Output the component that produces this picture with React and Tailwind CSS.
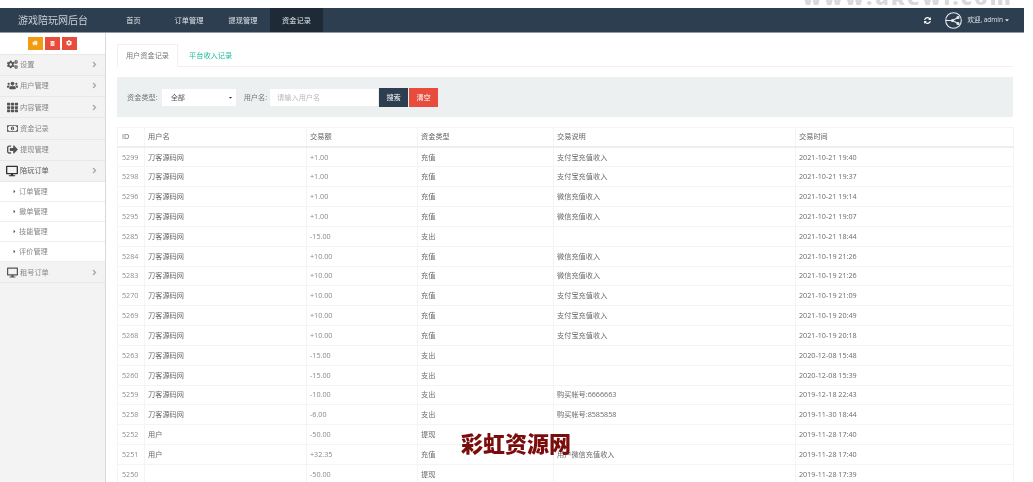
import React from "react";
import { FaCogs, FaUsers, FaTh, FaRegMoneyBillAlt, FaSignOutAlt, FaDesktop, FaHome, FaTrashAlt, FaCog, FaSyncAlt, FaCaretDown, FaCaretRight, FaAngleRight } from "react-icons/fa";

const font = "font-['Open_Sans','Noto_Sans_CJK_SC',sans-serif]";

const rows = [
  ["5299", "刀客源码网", "+1.00", "充值", "支付宝充值收入", "2021-10-21 19:40"],
  ["5298", "刀客源码网", "+1.00", "充值", "支付宝充值收入", "2021-10-21 19:37"],
  ["5296", "刀客源码网", "+1.00", "充值", "微信充值收入", "2021-10-21 19:14"],
  ["5295", "刀客源码网", "+1.00", "充值", "微信充值收入", "2021-10-21 19:07"],
  ["5285", "刀客源码网", "-15.00", "支出", "", "2021-10-21 18:44"],
  ["5284", "刀客源码网", "+10.00", "充值", "微信充值收入", "2021-10-19 21:26"],
  ["5283", "刀客源码网", "+10.00", "充值", "微信充值收入", "2021-10-19 21:26"],
  ["5270", "刀客源码网", "+10.00", "充值", "支付宝充值收入", "2021-10-19 21:09"],
  ["5269", "刀客源码网", "+10.00", "充值", "支付宝充值收入", "2021-10-19 20:49"],
  ["5268", "刀客源码网", "+10.00", "充值", "支付宝充值收入", "2021-10-19 20:18"],
  ["5263", "刀客源码网", "-15.00", "支出", "", "2020-12-08 15:48"],
  ["5260", "刀客源码网", "-15.00", "支出", "", "2020-12-08 15:39"],
  ["5259", "刀客源码网", "-10.00", "支出", "购买帐号:6666663", "2019-12-18 22:43"],
  ["5258", "刀客源码网", "-6.00", "支出", "购买帐号:8585858", "2019-11-30 18:44"],
  ["5252", "用户", "-50.00", "提现", "", "2019-11-28 17:40"],
  ["5251", "用户", "+32.35", "充值", "用户微信充值收入", "2019-11-28 17:40"],
  ["5250", "", "-50.00", "提现", "", "2019-11-28 17:39"],
];

function MenuItem({ icon, label, arrow = true, h = "h-[21.3px]" }) {
  return (
    <div className={`flex ${h} items-center border-b border-[#e8e8e8] pl-[5px] pr-[6px] text-[#888]`}>
      <span className="flex w-[14px] justify-center text-[11px] text-[#555]">{icon}</span>
      <span className="ml-[1px] flex-1 text-[7.2px] leading-none">{label}</span>
      {arrow && <FaAngleRight className="text-[9px] text-[#aaa]" />}
    </div>
  );
}

function SubItem({ label }) {
  return (
    <div className="flex h-[20px] items-center border-b border-[#eee] bg-white pl-[12px] text-[7.2px] text-[#888]">
      <FaCaretRight className="mr-[2px] text-[5px] text-[#555]" />
      {label}
    </div>
  );
}

function NavLink({ label, active, w }) {
  return (
    <div className={`flex h-full items-center justify-center text-[7.2px] ${w} ${active ? "bg-[#1e2a36] text-[#dfe4e8]" : "text-[#dfe4e8]"}`}>
      {label}
    </div>
  );
}

export default function App() {
  return (
    <div className={`relative h-[482px] w-[1033px] overflow-hidden bg-white blur-[0.35px] ${font}`}>
      <div className="flex h-[8px] justify-end overflow-hidden pr-[20px]">
        <div className="-mt-[15px] text-[21px] font-extrabold leading-[24px] tracking-[2.2px] text-[#d9d9d9]">www.ukewl.com</div>
      </div>

      <div className="flex h-[25px] w-[1024px] items-center border-b border-[#8f9aa5] bg-[#2c3e50]">
        <div className="w-[105px] pl-[18px] text-[10px] text-[#c9d0d6]">游戏陪玩网后台</div>
        <div className="flex h-full">
          <NavLink label="首页" w="w-[57px]" />
          <NavLink label="订单管理" w="w-[54px]" />
          <NavLink label="提现管理" w="w-[54px]" />
          <NavLink label="资金记录" w="w-[53px]" active />
        </div>
        <div className="ml-auto flex items-center pr-[14px] text-[#dfe4e8]">
          <FaSyncAlt className="mr-[14px] text-[7px] text-white" />
          <svg width="17" height="17" viewBox="0 0 17 17" fill="none" stroke="#e8ecef" strokeWidth="1.1">
            <circle cx="8.5" cy="8.5" r="7.8" />
            <path d="M1 8.5h6M7.5 8.5l5.5-3M7.5 8.5l5.5 3" />
            <circle cx="7.5" cy="8.5" r="1" fill="#e8ecef" />
            <circle cx="13" cy="5.5" r="1" fill="#e8ecef" />
            <circle cx="13" cy="11.5" r="1" fill="#e8ecef" />
          </svg>
          <span className="ml-[5px] text-[6.5px]">欢迎, admin</span>
          <FaCaretDown className="ml-[1px] text-[6px]" />
        </div>
      </div>

      <div className="flex h-[449px] w-[1024px]">
        <aside className="h-full w-[106px] shrink-0 border-r border-[#d9d9d9] bg-[#f3f3f3]">
          <div className="flex h-[21.5px] items-center justify-center gap-[2px] border-b border-[#e8e8e8] bg-white pr-[1px]">
            <span className="flex h-[13px] w-[15px] items-center justify-center bg-[#f39c12] text-[6px] text-white"><FaHome /></span>
            <span className="flex h-[13px] w-[15px] items-center justify-center bg-[#e74c3c] text-[5px] text-white"><FaTrashAlt /></span>
            <span className="flex h-[13px] w-[15px] items-center justify-center bg-[#e74c3c] text-[6px] text-white"><FaCog /></span>
          </div>
          <MenuItem icon={<FaCogs />} label="设置" />
          <MenuItem icon={<FaUsers />} label="用户管理" />
          <MenuItem icon={<FaTh />} label="内容管理" />
          <MenuItem icon={<FaRegMoneyBillAlt />} label="资金记录" arrow={false} />
          <MenuItem icon={<FaSignOutAlt />} label="提现管理" arrow={false} />
          <div className="flex h-[21px] items-center border-b border-[#e8e8e8] pl-[5px] pr-[6px] text-[#555]">
            <span className="flex w-[14px] justify-center text-[12px] text-[#333]"><FaDesktop /></span>
            <span className="ml-[1px] flex-1 text-[7.2px] leading-none">陪玩订单</span>
            <FaAngleRight className="text-[9px] text-[#aaa]" />
          </div>
          <SubItem label="订单管理" />
          <SubItem label="撤单管理" />
          <SubItem label="技能管理" />
          <SubItem label="评价管理" />
          <MenuItem icon={<FaDesktop />} label="租号订单" h="h-[21.5px]" />
        </aside>

        <main className="min-w-0 flex-1 pl-[11px] pr-[11px]">
          <div className="mt-[11px] flex h-[23px] border-b border-[#f0f0f0]">
            <div className="flex h-[23px] w-[61px] items-center justify-center border border-b-white border-[#f0f0f0] bg-white text-[7.2px] text-[#777]">用户资金记录</div>
            <div className="ml-[11px] flex items-center text-[7.2px] text-[#1abc9c]">平台收入记录</div>
          </div>

          <div className="mt-[10px] flex h-[40px] items-center bg-[#ecf0f1] pl-[10px] text-[7.2px] text-[#777]">
            <span>资金类型:</span>
            <div className="ml-[4px] flex h-[17px] w-[74px] items-center justify-between bg-white pl-[9px] pr-[3px] text-[#555]">
              <span>全部</span>
              <FaCaretDown className="text-[5px] text-[#333]" />
            </div>
            <span className="ml-[8px]">用户名:</span>
            <div className="ml-[3px] flex h-[17px] w-[108px] items-center bg-white pl-[7px] text-[#bbb]">请输入用户名</div>
            <button className="ml-[1px] h-[19px] w-[29px] bg-[#2c3e50] text-[7.2px] text-white">搜索</button>
            <button className="ml-[1px] h-[19px] w-[29px] bg-[#e74c3c] text-[7.2px] text-white">清空</button>
          </div>

          <table className="mt-[9.5px] w-[896px] table-fixed border-collapse text-[7.2px] text-[#676a6c]">
            <colgroup>
              <col className="w-[27px]" />
              <col className="w-[162px]" />
              <col className="w-[111px]" />
              <col className="w-[136px]" />
              <col className="w-[242px]" />
              <col className="w-[218px]" />
            </colgroup>
            <thead>
              <tr className="h-[20px] border-b-2 border-[#eeeeee] text-left text-[#666]">
                <th className="border border-b-2 border-[#f4f4f4] border-b-[#eeeeee] pl-[4px] font-normal">ID</th>
                <th className="border border-b-2 border-[#f4f4f4] border-b-[#eeeeee] pl-[3px] font-normal">用户名</th>
                <th className="border border-b-2 border-[#f4f4f4] border-b-[#eeeeee] pl-[3px] font-normal">交易额</th>
                <th className="border border-b-2 border-[#f4f4f4] border-b-[#eeeeee] pl-[3px] font-normal">资金类型</th>
                <th className="border border-b-2 border-[#f4f4f4] border-b-[#eeeeee] pl-[3px] font-normal">交易说明</th>
                <th className="border border-b-2 border-[#f4f4f4] border-b-[#eeeeee] pl-[3px] font-normal">交易时间</th>
              </tr>
            </thead>
            <tbody>
              {rows.map((r) => (
                <tr key={r[0]} className="h-[19.85px]">
                  <td className="border border-[#f4f4f4] pl-[4px] leading-none text-[#8a8f93]">{r[0]}</td>
                  <td className="border border-[#f4f4f4] pl-[3px] leading-none">{r[1]}</td>
                  <td className="border border-[#f4f4f4] pl-[3px] leading-none text-[#888]">{r[2]}</td>
                  <td className="border border-[#f4f4f4] pl-[3px] leading-none">{r[3]}</td>
                  <td className="border border-[#f4f4f4] pl-[3px] leading-none">{r[4]}</td>
                  <td className="border border-[#f4f4f4] pl-[3px] leading-none">{r[5]}</td>
                </tr>
              ))}
            </tbody>
          </table>
        </main>
      </div>

      <div className="absolute left-[461px] top-[431px] text-[22px] font-black leading-[24px] text-[#7a0c0c]">彩虹资源网</div>
    </div>
  );
}
